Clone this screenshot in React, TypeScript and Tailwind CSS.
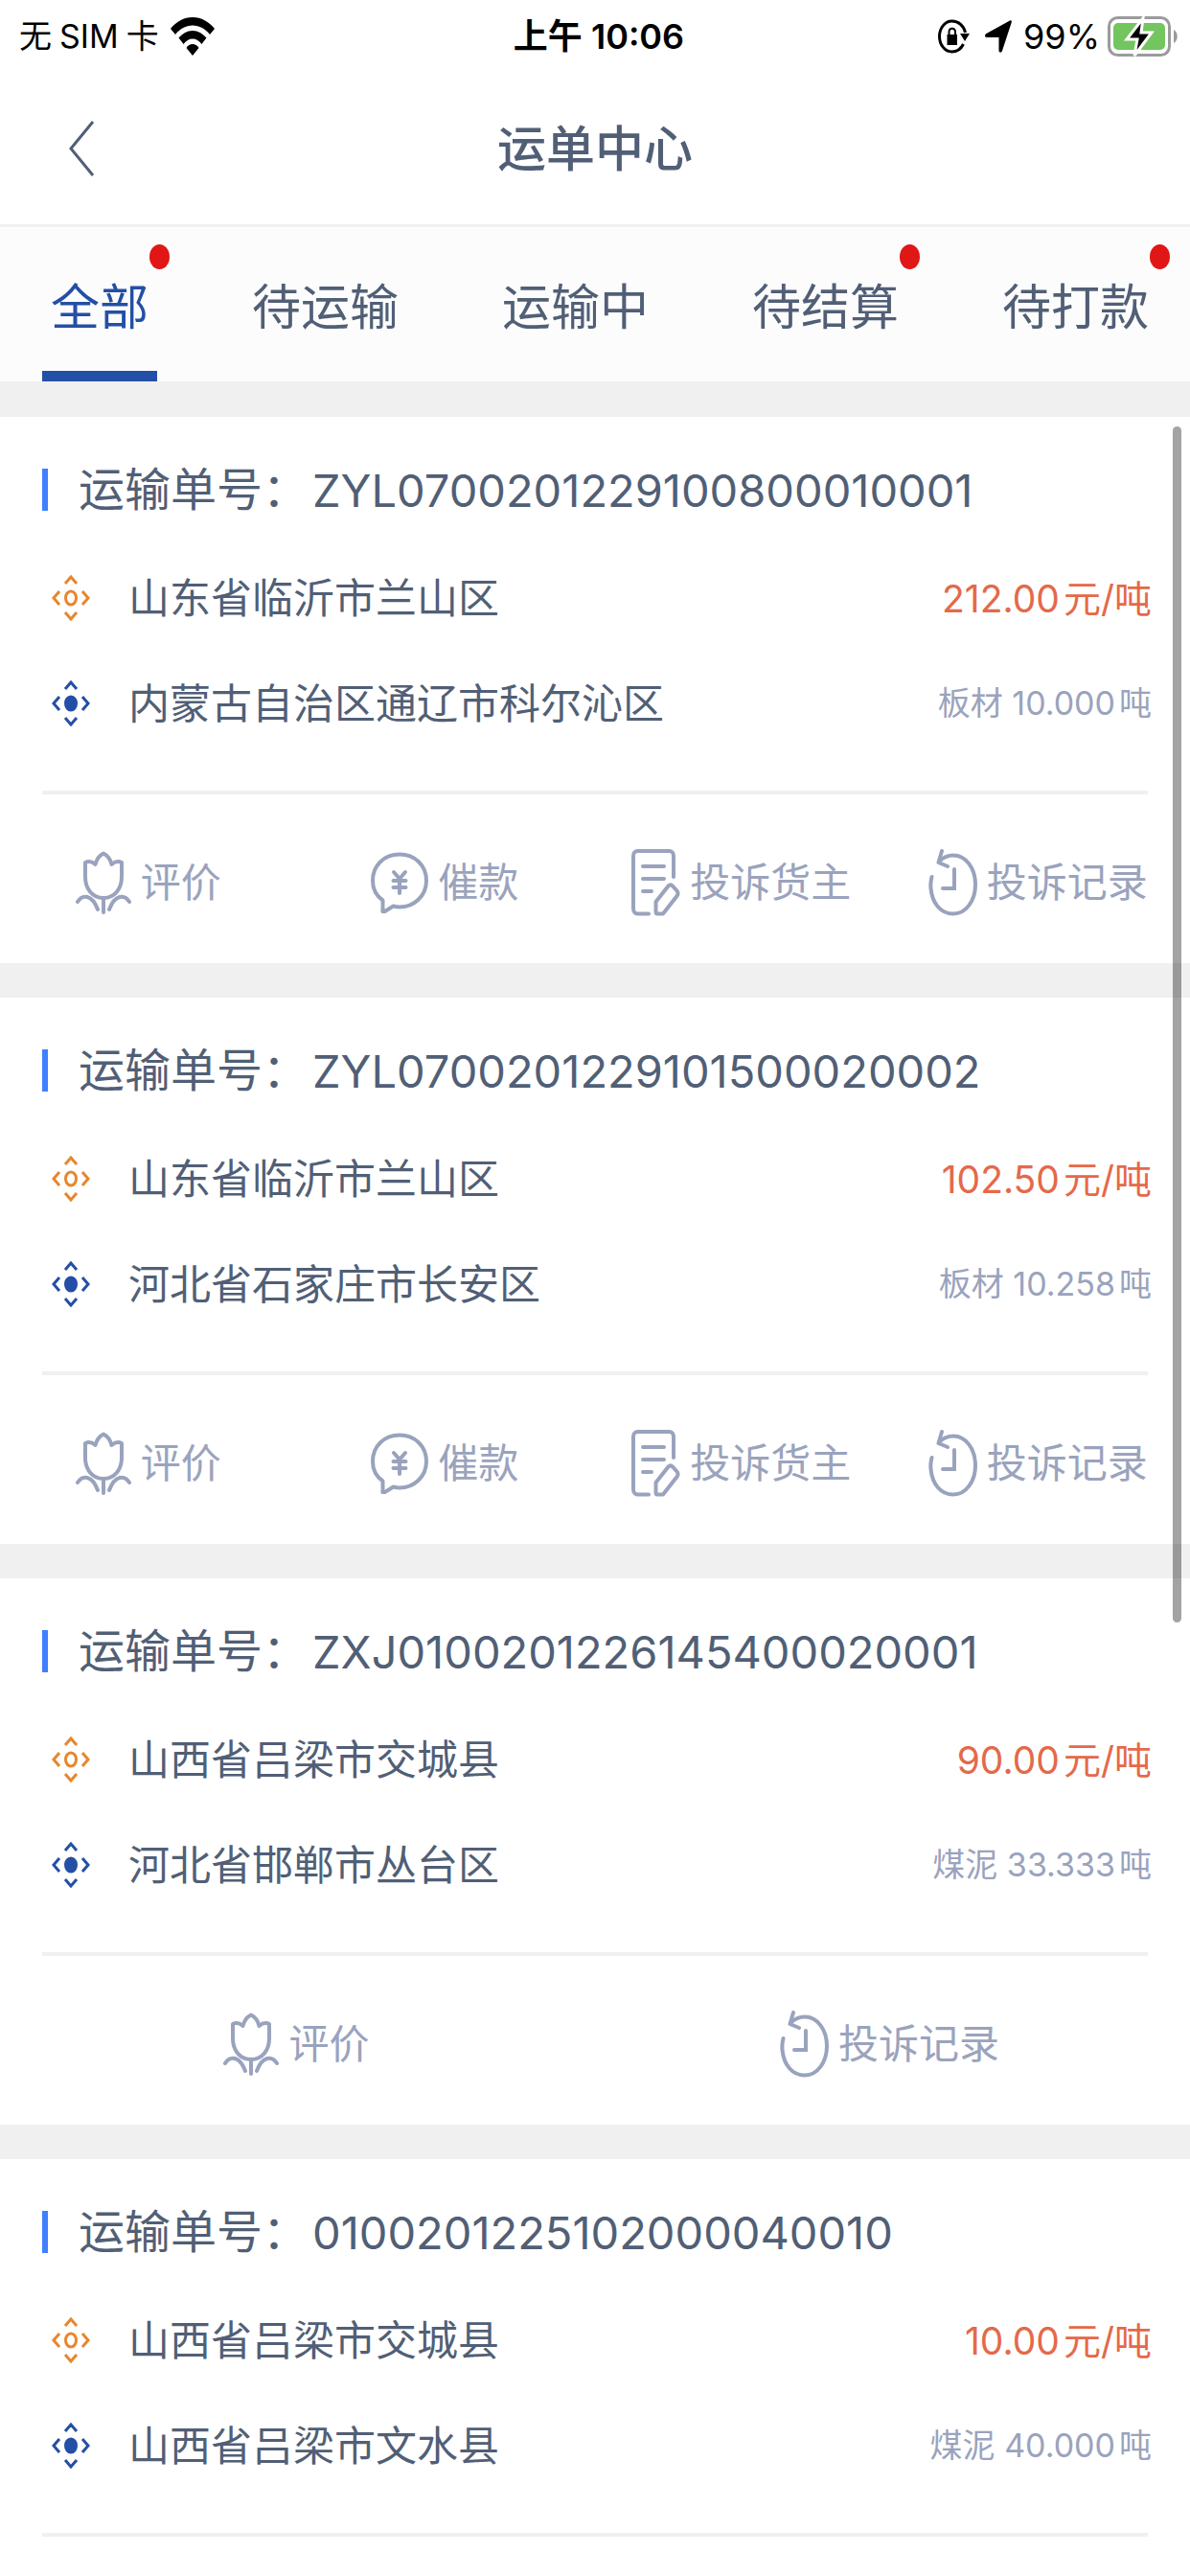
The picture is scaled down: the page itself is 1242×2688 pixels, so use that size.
import { useState } from "react";
import type { ReactNode } from "react";

type Action = "rate" | "urge" | "complain" | "history";

interface Waybill {
  no: string;
  from: string;
  to: string;
  price: string;
  goods: string;
  actions: Action[];
}

const tabs = [
  { label: "全部", dot: true },
  { label: "待运输", dot: false },
  { label: "运输中", dot: false },
  { label: "待结算", dot: true },
  { label: "待打款", dot: true },
];

const waybills: Waybill[] = [
  {
    no: "ZYL0700201229100800010001",
    from: "山东省临沂市兰山区",
    to: "内蒙古自治区通辽市科尔沁区",
    price: "212.00",
    goods: "板材 10.000",
    actions: ["rate", "urge", "complain", "history"],
  },
  {
    no: "ZYL0700201229101500020002",
    from: "山东省临沂市兰山区",
    to: "河北省石家庄市长安区",
    price: "102.50",
    goods: "板材 10.258",
    actions: ["rate", "urge", "complain", "history"],
  },
  {
    no: "ZXJ0100201226145400020001",
    from: "山西省吕梁市交城县",
    to: "河北省邯郸市丛台区",
    price: "90.00",
    goods: "煤泥 33.333",
    actions: ["rate", "history"],
  },
  {
    no: "0100201225102000040010",
    from: "山西省吕梁市交城县",
    to: "山西省吕梁市文水县",
    price: "10.00",
    goods: "煤泥 40.000",
    actions: [],
  },
];

const TulipIcon = () => (
  <svg width="58" height="66" viewBox="0 0 58 66" fill="none" stroke="currentColor" strokeWidth="4" strokeLinejoin="round" strokeLinecap="round">
    <path d="M10 12C13 10.500 17 11 20.500 14C22 8 25 4.500 29 2.500C33 4.500 36 8 37.500 14C41 11 45 10.500 48 12V27C48 39 41 49 29 49C17 49 10 39 10 27Z" />
    <path d="M29 49V64M2 53C7 45 17 45 23 61M56 53C51 45 41 45 35 61" />
  </svg>
);

const BubbleIcon = () => (
  <svg width="60" height="64" viewBox="0 0 60 64" fill="none" stroke="currentColor" strokeWidth="4" strokeLinejoin="round" strokeLinecap="round">
    <path d="M12.500 50.500C5.500 45.500 2 38 2 30C2 14 14 2.500 30 2.500S58 14 58 30S45 57.500 30 57.500C27.500 57.500 25.500 57 23.500 56.500L14 62.500C12.500 63 12 62 12.500 60Z" />
    <path d="M24 21L30 28L36 21M30 28V43M23.500 30H36.500M23.500 37H36.500" />
  </svg>
);

const DocIcon = () => (
  <svg width="51" height="70" viewBox="0 0 51 70" fill="none" stroke="currentColor" strokeWidth="4" strokeLinejoin="round" strokeLinecap="round">
    <path d="M44 29V7C44 4 42 2 39.500 2H6.500C4 2 2 4 2 7V62C2 65 4 67.500 6.500 67.500H18" />
    <path d="M12 18H34M12 31H34M12 44H21" />
    <path d="M25.500 55L38.500 38.500C40 37 41.500 37 43 38.500L47.500 43.500C49 45.500 49 47 47.500 49L33 67.500H27C26 67.500 25.500 66.500 25.500 65Z" />
  </svg>
);

const HistoryIcon = () => (
  <svg width="51" height="70" viewBox="0 0 51 70" fill="none" stroke="currentColor" strokeWidth="4" strokeLinejoin="round" strokeLinecap="round">
    <path d="M3.500 29C2.500 33 2 36 2.500 41C4 57 13 67.500 26 67.500C39 67.500 49 54 49 37C49 20 39 6.500 26 6.500C20 6.500 15 9 11 13" />
    <path d="M14 2L10.500 14L20 18" />
    <path d="M27 21V41H15" strokeLinejoin="miter" />
  </svg>
);

const actionMap: Record<Action, { label: string; icon: ReactNode }> = {
  rate: { label: "评价", icon: <TulipIcon /> },
  urge: { label: "催款", icon: <BubbleIcon /> },
  complain: { label: "投诉货主", icon: <DocIcon /> },
  history: { label: "投诉记录", icon: <HistoryIcon /> },
};

const PlaceIcon = ({ filled }: { filled?: boolean }) => (
  <svg width="40" height="48" viewBox="0 0 40 48" fill="none" stroke="currentColor" strokeWidth="3" className="shrink-0">
    <path d="M14 9L20 2L26 9M14 39L20 46L26 39M8 17L2 24L8 31M32 17L38 24L32 31" />
    <ellipse cx="20" cy="24" rx="5.500" ry="7" fill={filled ? "currentColor" : "none"} />
  </svg>
);

const StatusBar = () => (
  <div className="grid h-[76px] grid-cols-3 items-center pr-3 pl-5 text-[36px] leading-none text-black">
    <div className="flex items-center gap-2 text-[34px]">
      <span>无</span>
      <span>SIM</span>
      <span>卡</span>
      <svg width="46" height="40" viewBox="0 0 46 40" fill="currentColor" className="ml-1">
        <path d="M23 0C14 0 6 4.500 0 12L5 18C10 12 16 8.500 23 8.500S36 12 41 18L46 12C40 4.500 32 0 23 0Z" />
        <path d="M23 14C17.500 14 12.500 17 8.500 21.500L13.500 28C16 24.500 19.500 22.500 23 22.500S30 24.500 32.500 28L37.500 21.500C33.500 17 28.500 14 23 14Z" />
        <path d="M23 28C20.500 28 18 29.500 16.500 32L23 40L29.500 32C28 29.500 25.500 28 23 28Z" />
      </svg>
    </div>
    <div className="text-center font-semibold">上午 10:06</div>
    <div className="flex items-center justify-end">
      <svg width="33" height="36" viewBox="0 0 33 36" className="mr-4">
        <path d="M28.500 14C27 7 21.500 2 14.500 2C7.500 2 1.500 9 1.500 18S7.500 34 14.500 34C19.500 34 24 31 26.500 26" fill="none" stroke="currentColor" strokeWidth="3" />
        <path d="M23 15H33L28 23Z" fill="currentColor" />
        <path d="M9.500 16H20V27H9.500Z" fill="currentColor" />
        <path d="M11.500 17V13.500C11.500 8.500 18 8.500 18 13.500V17" fill="none" stroke="currentColor" strokeWidth="2" />
      </svg>
      <svg width="28" height="34" viewBox="0 0 28 34" fill="currentColor" className="mr-3">
        <path d="M26 0.500C27.500 0 28 1 27.700 2.500L18 32C17 34.500 14.500 34 14.500 31.500V18H2C-0.500 18 -0.500 15 1.500 14Z" />
      </svg>
      <span className="mr-2">99%</span>
      <svg width="74" height="42" viewBox="0 0 74 42">
        <rect x="1.500" y="1.500" width="63" height="39" rx="9" fill="#fff" stroke="#9b9b9b" strokeWidth="3" />
        <rect x="6" y="7" width="54" height="28" rx="5" fill="#72c55f" />
        <path d="M69 14C74 17 74 25 69 28Z" fill="#9b9b9b" />
        <path d="M37 2L20 24H31L28 41L46 17H35Z" fill="#000" stroke="#fff" strokeWidth="3" />
      </svg>
    </div>
  </div>
);

const WaybillCard = ({ bill }: { bill: Waybill }) => (
  <article className="bg-white">
    <div className="pt-10 pr-10 pl-11">
      <h2 className="flex h-[72px] items-center text-[48px] leading-none">
        <span className="mr-8 h-11 w-1.5 bg-[#4080ff]" />
        <span>运输单号：</span>
        <span className="ml-1 text-[47px]">{bill.no}</span>
      </h2>
      <div className="mt-[22px] flex h-[110px] items-center">
        <span className="mr-10 ml-[10px] text-[#e8862d]">
          <PlaceIcon />
        </span>
        <span className="flex-1 text-[43px] leading-none">{bill.from}</span>
        <span className="flex gap-1 text-[39px] leading-none text-[#e4694a]">
          <span>{bill.price}</span>
          <span>元/吨</span>
        </span>
      </div>
      <div className="flex h-[110px] items-center">
        <span className="mr-10 ml-[10px] text-[#244fa6]">
          <PlaceIcon filled />
        </span>
        <span className="flex-1 text-[43px] leading-none">{bill.to}</span>
        <span className="flex gap-1 text-[34px] leading-none text-[#9aa3bd]">
          <span>{bill.goods}</span>
          <span>吨</span>
        </span>
      </div>
      <div className="mt-9 mr-1 h-1 bg-[#f0f0f0]" />
    </div>
    <div className="flex h-[176px] items-center pt-2 pr-1 text-[42px] leading-none text-[#9aa3bd]">
      {bill.actions.map((key) => (
        <button key={key} type="button" className="flex flex-1 items-center justify-center gap-[10px]">
          {actionMap[key].icon}
          {actionMap[key].label}
        </button>
      ))}
    </div>
  </article>
);

export default function App() {
  const [active, setActive] = useState(0);

  return (
    <div className="h-screen overflow-hidden bg-white font-['Inter','Noto_Sans_CJK_SC',sans-serif] text-[#515f76]">
      <StatusBar />

      {/* Header */}
      <header className="grid h-[158px] grid-cols-3 items-center">
        <button type="button" aria-label="返回" className="ml-[71px] w-8">
          <svg width="28" height="58" viewBox="0 0 28 58" fill="none" stroke="currentColor" strokeWidth="3">
            <path d="M26 1L3 29L26 57" />
          </svg>
        </button>
        <h1 className="text-center text-[51px] leading-none font-medium">运单中心</h1>
      </header>

      {/* Tabs */}
      <nav className="flex gap-[90px] border-t-3 border-[#f0f0f0] bg-[#fcfcfc] pl-11">
        {tabs.map((tab, i) => (
          <button
            key={tab.label}
            type="button"
            onClick={() => setActive(i)}
            className={`relative h-[161px] shrink-0 border-b-11 px-[9px] pt-4 text-[51px] leading-none ${
              active === i ? "border-[#244fa6] text-[#244fa6]" : "border-transparent"
            }`}
          >
            {tab.label}
            {tab.dot && (
              <span className="absolute top-[18px] -right-[13px] h-[26px] w-[21px] rounded-[50%] bg-[#e11616]" />
            )}
          </button>
        ))}
      </nav>

      {/* Waybill list */}
      <main className="relative flex flex-col gap-9 bg-[#f0f0f0] pt-[37px]">
        {waybills.map((bill) => (
          <WaybillCard key={bill.no} bill={bill} />
        ))}
        <div className="absolute top-[47px] right-[9px] h-[1248px] w-[9px] rounded-full bg-black/36" />
      </main>
    </div>
  );
}
